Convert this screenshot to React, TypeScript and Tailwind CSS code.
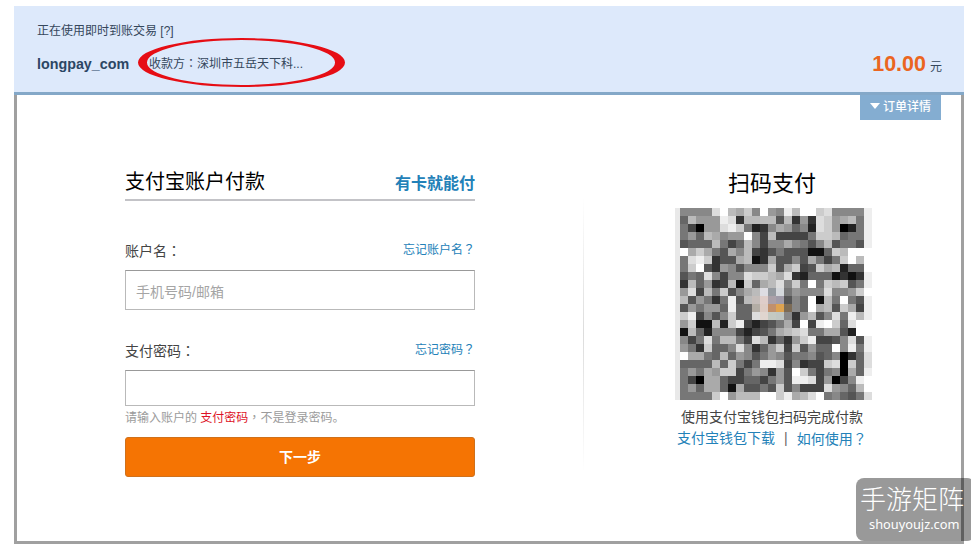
import { ReactNode } from 'react';

// one hex digit per cell, 0 = black, f = white
const qrRows = [
  '8888dfbac8f98ebffcd8888e',
  '6b999ed3bbbb5b393dc9ab7e',
  '74099dec7238a9682dc9027e',
  '796ba899f84b44447ccb677e',
  '5666b746b8488a8758b5775e',
  'faca75a8b4357555116cbfff',
  '7dec355ab13a5585a747cfbf',
  '7cf53985888c5ac45cab266f',
  '576d8488dccbad326661313e',
  '3b6934b1c6abd8c7f7cbc57e',
  '9d4b7c58abd9d79888d889cf',
  'b59737e5bcdba586f1b7f75e',
  '597996e66bdba786fab5ca4e',
  'ce4858c66ddcc839b58d7ebe',
  '9c11b2ce42457a4f4efc6dff',
  '1b6288842457abcd77aa52ff',
  '847d7bb74db3639ce4458d5e',
  '973c668d8369c4c5966f8e7e',
  'faa76b69857985778568036d',
  '6666b6c747eed48344cd0c6d',
  '797a9cc4798395fc74780a6e',
  '740aa644664795eed49048ef',
  '796aa61a5575c58444d986bf',
  '7777cf9bbbffceabdf78657d',
];

const qrTints: Record<string, string> = {
  '10-10': '#dedde3',
  '10-11': '#959aa0',
  '10-12': '#d5d8dc',
  '11-9': '#c5bdba',
  '11-10': '#dfcdc9',
  '11-11': '#aaa0a8',
  '11-12': '#a09ba8',
  '12-9': '#b3ada5',
  '12-10': '#ddcbc3',
  '12-11': '#c1906c',
  '12-12': '#dea350',
  '12-13': '#7c6b55',
  '13-10': '#e0d5cf',
  '13-11': '#c4c9c2',
  '13-12': '#c0c6c2',
};

const QrCode = () => (
  <svg width="197" height="192" viewBox="0 0 197 192" shapeRendering="crispEdges" className="block">
    <rect width="5" height="192" fill="#e9e9e9" />
    {qrRows.map((row, y) =>
      row.split('').map((c, x) => (
        <rect
          key={`${y}-${x}`}
          x={5 + x * 8}
          y={y * 8}
          width="8"
          height="8"
          fill={qrTints[`${y}-${x}`] ?? `#${c.repeat(6)}`}
        />
      ))
    )}
  </svg>
);

// centred full-width punctuation
const P = ({ children }: { children: ReactNode }) => (
  <span className="font-['Noto_Sans_CJK_TC',sans-serif]">{children}</span>
);

const Header = () => (
  <header className="flex h-[89px] justify-between border-b-[3px] border-[#84a8c8] bg-[#dde9fb] pl-[23px] pr-[22px] text-xs text-[#35475c]">
    <div className="pt-[15px]">
      <p className="leading-5">正在使用即时到账交易 [?]</p>
      <div className="relative mt-3 flex items-center leading-5">
        <strong className="w-[112px] text-[14.3px] text-[#2b4664]">longpay_com</strong>
        <span>收款方<P>：</P>深圳市五岳天下科...</span>
        <svg className="absolute left-[101px] top-[-15px]" width="207" height="49" viewBox="0 0 208 50" preserveAspectRatio="none">
          <path
            fill="#e60d14"
            fillRule="evenodd"
            d="M0 25a104 25 0 1 0 208 0a104 25 0 1 0-208 0zM9 25a94.5 23 0 1 0 189 0a94.5 23 0 1 0-189 0z"
          />
        </svg>
      </div>
    </div>
    <div className="flex h-7 items-baseline pt-[44px]">
      <strong className="text-[21.5px] leading-7 text-[#eb6520]">10.00</strong>
      <span className="ml-[4px]">元</span>
    </div>
  </header>
);

const LoginForm = () => (
  <section className="w-[350px]">
    <div className="flex h-[35px] justify-between border-b-2 border-[#c3c3c7]">
      <h2 className="text-xl leading-[32px] text-black">支付宝账户付款</h2>
      <a href="#" className="text-base font-bold leading-[36px] text-[#2381b8]">有卡就能付</a>
    </div>

    <div className="mt-[37px] flex h-8 justify-between">
      <label className="text-sm leading-6">账户名<P>：</P></label>
      <a href="#" className="text-xs leading-[21px] text-[#2381b8]">忘记账户名<P>？</P></a>
    </div>
    <input
      type="text"
      placeholder="手机号码/邮箱"
      className="block h-10 w-full border border-[#b9b9b9] border-t-[#999] bg-white px-[10px] pt-1 text-sm placeholder:text-[#a5a5a5]"
    />

    <div className="mt-[27px] flex h-[33px] justify-between">
      <label className="text-sm leading-[26px]">支付密码<P>：</P></label>
      <a href="#" className="text-xs leading-[23px] text-[#2381b8]">忘记密码<P>？</P></a>
    </div>
    <input type="password" className="block h-9 w-full border border-[#b9b9b9] border-t-[#999] bg-white px-[10px]" />
    <p className="mt-px text-xs leading-5 text-[#9b9b9b]">
      请输入账户的 <span className="text-[#dd1226]">支付密码</span><P>，</P>不是登录密码。
    </p>

    <button className="mt-[9px] block h-10 w-full rounded-[3px] border border-[#cf711c] bg-[#f57403] text-sm font-bold text-white">
      下一步
    </button>
  </section>
);

const ScanPay = () => (
  <section className="ml-[91px] mt-[2px] flex w-[197px] flex-col">
    <h2 className="pl-[53px] text-[22px] leading-8 text-black">扫码支付</h2>
    <div className="mt-2">
      <QrCode />
    </div>
    <p className="mt-[6px] pl-[6px] text-sm leading-[22px]">使用支付宝钱包扫码完成付款</p>
    <p className="flex whitespace-nowrap pl-[2px] text-sm leading-5 text-[#2381b8]">
      <a href="#">支付宝钱包下载</a>
      <span className="mx-[9px] text-[#666]">|</span>
      <a href="#">如何使用<P>？</P></a>
    </p>
  </section>
);

const App = () => {
  return (
    <div className="relative h-[544px] w-[971px] overflow-hidden bg-white pl-[14px] pt-[6px] font-['Liberation_Sans','Noto_Sans_CJK_SC',sans-serif] text-[#444]">
      <div className="w-[950px]">
        <Header />
        <main className="h-[449px] border-x-[3px] border-b-[3px] border-[#a0a0a0]">
          <div className="flex h-[71px] items-start justify-end pr-5">
            <a href="#" className="flex h-[25px] w-[81px] items-center gap-[3px] bg-[#84add1] pl-[10px] text-xs font-medium text-white">
              <svg className="-mt-[3px]" width="10" height="6" viewBox="0 0 10 6">
                <path d="M0 0h10L5 6z" fill="#fff" />
              </svg>
              <span className="-mt-[2px]">订单详情</span>
            </a>
          </div>
          <div className="flex pl-[108px]">
            <LoginForm />
            <div className="ml-[108px] mt-[30px] h-[276px] w-px bg-linear-to-b from-transparent via-[#dcdcdc] to-transparent" />
            <ScanPay />
          </div>
        </main>
      </div>

      <div className="absolute left-[856px] top-[478px] h-[63px] w-[119px] rounded-lg bg-black/40 pl-1 text-white">
        <p className="whitespace-nowrap pt-[5px] text-[26px] font-light leading-[34px]">手游矩阵</p>
        <p className="pl-[9px] font-['Noto_Sans',sans-serif] text-[12.8px] leading-[14px]">shouyoujz.com</p>
      </div>
    </div>
  );
};

export default App;
